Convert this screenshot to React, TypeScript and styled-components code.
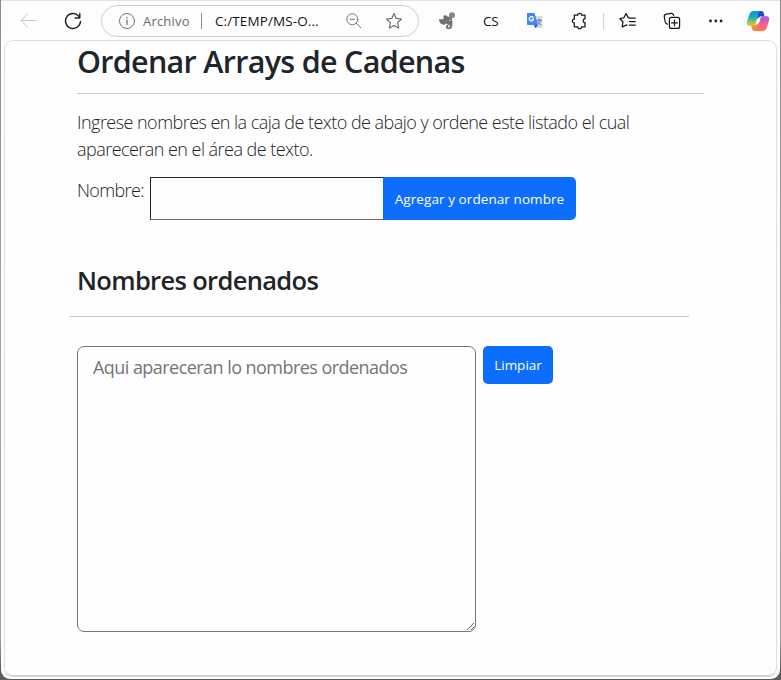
import React from "react";
import styled, { createGlobalStyle } from "styled-components";

const GlobalStyle = createGlobalStyle`
  * { box-sizing: border-box; }
  body {
    margin: 0;
    overflow: hidden;
    background: #626262;
    color: #212529;
    font-family: "Open Sans", "Noto Sans", sans-serif;
  }
`;

const Desktop = styled.div`
  height: 680px;
  padding: 0 1px 1px;
  background: linear-gradient(#8b8b8b 0, #a6a6a6 380px, #9e9e9e 640px, #5c5c5c 670px);
`;

const Window = styled.div`
  height: 679px;
  padding: 0 3px 2px;
  display: flex;
  flex-direction: column;
  background: #fdfdfd;
  border-top: 1px solid #e3e3e3;
  border-radius: 0 0 9px 9px;
`;

const Toolbar = styled.header`
  height: 39px;
  flex: none;
  display: flex;
  align-items: center;
  padding-left: 14px;
`;

const Glyph = styled.svg<{ $gap?: number }>`
  display: block;
  flex: none;
  margin-left: ${(p) => p.$gap ?? 0}px;
  fill: none;
  stroke-linecap: round;
  stroke-linejoin: round;
`;

const AddressBar = styled.div`
  width: 318px;
  height: 32px;
  margin-left: 18px;
  display: flex;
  align-items: center;
  border: 1px solid #cfcfcf;
  border-radius: 16px;
  font-size: 13px;
  white-space: nowrap;
`;

const Scheme = styled.span`
  width: 58px;
  margin-left: 7px;
  color: #6c6c6c;
  letter-spacing: 0.2px;
`;

const Address = styled.span`
  width: 104px;
  margin-left: 13px;
  color: #151515;
  font-size: 13.5px;
  letter-spacing: 0.1px;
`;

const Divider = styled.i<{ $gap?: number }>`
  width: 1px;
  height: 16px;
  margin-left: ${(p) => p.$gap ?? 0}px;
  background: #8f8f8f;
`;

const FaintDivider = styled(Divider)`
  background: #d2d2d2;
`;

const ExtensionLabel = styled.span`
  width: 18px;
  margin-left: 27px;
  font-size: 13.5px;
  font-weight: 500;
  color: #111;
  letter-spacing: -0.3px;
`;

const Page = styled.main`
  flex: 1;
  padding: 0 72px;
  border: 1px solid #dedede;
  border-bottom: 2px solid #d4d4d4;
  border-radius: 9px;
  background: #fefefe;
`;

const Title = styled.h1`
  height: 53px;
  width: 627px;
  margin: 0;
  line-height: 40px;
  font-size: 30.5px;
  font-weight: 600;
  letter-spacing: -0.7px;
  white-space: nowrap;
  border-bottom: 1px solid #c5c7c8;
`;

const Lead = styled.p`
  margin: 15px 0 0;
  font-size: 18px;
  font-weight: 300;
  line-height: 27px;
  letter-spacing: -0.54px;
  white-space: nowrap;
`;

const EntryRow = styled.form`
  display: flex;
  margin-top: 14px;
`;

const Label = styled.label`
  width: 73px;
  font-size: 18px;
  font-weight: 300;
  line-height: 27px;
  letter-spacing: -0.65px;
`;

const NameInput = styled.input`
  width: 233px;
  height: 43px;
  padding: 0 12px;
  border: 1px solid #212529;
  border-bottom-color: #6c6c6c;
  border-right: 0;
  border-radius: 0;
  background: #fefefe;
  font: 18px "Open Sans", sans-serif;
  outline: none;
`;

const Button = styled.button`
  width: 70px;
  height: 38px;
  padding: 0;
  border: 0;
  border-radius: 5px;
  background: #0d6efd;
  color: #fff;
  font: 500 13.5px "Open Sans", sans-serif;
  white-space: nowrap;
`;

const AddButton = styled(Button)`
  width: 193px;
  height: 43px;
  border-radius: 0 5px 5px 0;
  letter-spacing: 0.08px;
`;

const Subtitle = styled.h2`
  height: 57px;
  width: 619px;
  margin: 40px 0 0 -7px;
  padding-left: 7px;
  line-height: 40px;
  font-size: 25.5px;
  font-weight: 600;
  letter-spacing: -0.66px;
  white-space: nowrap;
  border-bottom: 1px solid #c5c7c8;
`;

const ResultRow = styled.section`
  display: flex;
  gap: 7px;
  align-items: flex-start;
  margin-top: 29px;
`;

const ResultArea = styled.textarea`
  display: block;
  width: 399px;
  height: 286px;
  padding: 7px 15px;
  border: 1px solid #767676;
  border-radius: 7px;
  background: #fefefe;
  font: 18px/27px "Open Sans", sans-serif;
  letter-spacing: -0.55px;
  outline: none;
  &::placeholder { color: #757575; opacity: 1; }
`;

const BackIcon = () => (
  <Glyph width="20" height="20" stroke="#c6c6c6">
    <path d="M18 9.5H3M9.5 3 3 9.5 9.5 16" />
  </Glyph>
);

const ReloadIcon = () => (
  <Glyph width="20" height="20" $gap={25} stroke="#202020" strokeWidth="1.4">
    <path d="M17.5 10.5A7.5 7.5 0 1 1 15.8 5.2M16.8 2.5V7H12.2" />
  </Glyph>
);

const InfoIcon = () => (
  <Glyph width="18" height="18" $gap={16} stroke="#747474">
    <circle cx="9" cy="9" r="7.5" />
    <path d="M9 8v4.5M9 5.4v.4" strokeWidth="1.3" />
  </Glyph>
);

const ZoomOutIcon = () => (
  <Glyph width="18" height="18" $gap={26} stroke="#747474">
    <circle cx="7.3" cy="7.3" r="5.5" />
    <path d="M5 7.3h4.6M11.3 11.3l4.5 4.5" />
  </Glyph>
);

const StarIcon = () => (
  <Glyph width="18" height="18" $gap={22} stroke="#686868" strokeWidth="1.1">
    <path d="m9 1.5 2.2 4.9 5.3.6-3.9 3.7 1 5.3L9 13.4 4.4 16l1-5.3L1.5 7l5.3-.6Z" />
  </Glyph>
);

const ElephantIcon = () => (
  <Glyph width="18" height="18" $gap={19}>
    <circle cx="14" cy="3.3" r="3" fill="#858585" />
    <path
      fill="#707070"
      d="M5.5 3.7C7 2.7 9.2 3.2 9.5 4.6c2 .3 3.3.7 4 1.7 1.4 2.6.9 6.4.5 8.5-.3 1.8-1.6 2.5-3.3 2.5-2.1 0-3-1.2-2.8-2.8.2-1.2 1.4-1.6 2.6-1.3v1.5h-1c0 1 2.5 1.2 2.5-.4 0-1.3-1.3-1.8-2.5-1.9-.6-.1-1-.8-1.2-1.3-.4 1.5-1.4 1.8-2.8 1.6C2.6 12.3 1 10 1 7.2h3.5c.8 0 1-.3 1-1Z"
    />
    <path fill="#fdfdfd" d="M11.3 8.1c1-.5 1.5.1 1.5 1-.6-.2-1-.3-1.6-.2Z" />
  </Glyph>
);

const TranslateIcon = () => (
  <Glyph width="18" height="18" $gap={25}>
    <path fill="#d9d9d9" d="M6 4h10.5v12H10Z" />
    <path stroke="#657f94" d="M11 8.3h4.6M13 7.2v1.1m1.6 0c-.4 2-1.4 3.2-2.8 4.2M12 9.6c.6 1.4 1.6 2.4 2.8 3.2" />
    <path fill="#4285f4" d="M1 1h7.5L12 13H2a1 1 0 0 1-1-1Z" />
    <path fill="#2559b5" d="m8 13 4 0-2.8 3.3Z" />
    <path stroke="#fff" strokeWidth="1.2" d="M7.3 5.6A2.2 2.2 0 1 0 7.6 7.4H5.9" />
  </Glyph>
);

const PuzzleIcon = () => (
  <Glyph width="18" height="18" $gap={27} stroke="#171717" strokeWidth="1.25">
    <path d="M3.3 3.2h3.4C6.4.7 10.8.7 10.5 3.2H14v3.5c-2.3-.1-2.5 4.1 0 4v4.1h-3.5c.4 2.4-4.1 2.4-3.8 0H3.3v-3.9C.7 11.2.7 6.8 3.3 7.1Z" />
  </Glyph>
);

const FavoritesIcon = () => (
  <Glyph width="18" height="18" $gap={15} stroke="#171717" strokeWidth="1.25">
    <path d="M10.4 5.8 9.2 5.6 7 1.5 4.9 5.8.8 6.5l3.1 3.3-.7 5L8 12.9M10.3 6h6M10.3 9.5h6M10.3 13h6" />
  </Glyph>
);

const CollectionsIcon = () => (
  <Glyph width="18" height="18" $gap={26} stroke="#171717" strokeWidth="1.2">
    <rect x="6.4" y="5.4" width="10.2" height="11" rx="2" />
    <path d="M4.4 12.2C3 12 2.4 11 2.1 9.7L1.3 4.8C1 3.2 2 2.5 3.3 2.2l5-.8c1.5-.2 2.2.8 2.4 2M8.6 10.9h5.8M11.5 8v5.8" />
  </Glyph>
);

const MoreIcon = () => (
  <Glyph width="18" height="18" $gap={26}>
    <g fill="#222">
      <circle cx="3.5" cy="9" r="1.4" />
      <circle cx="8.8" cy="9" r="1.4" />
      <circle cx="14.1" cy="9" r="1.4" />
    </g>
  </Glyph>
);

const CopilotIcon = () => (
  <Glyph width="24" height="22" $gap={21}>
    <defs>
      <linearGradient id="coolRibbon" x1="0" y1="0" x2="0" y2="1">
        <stop stopColor="#168ce0" />
        <stop offset=".45" stopColor="#21aeb5" />
        <stop offset=".75" stopColor="#9bc35a" />
        <stop offset="1" stopColor="#f4ba2e" />
      </linearGradient>
      <linearGradient id="warmRibbon" x1="0" y1="0" x2="0" y2="1">
        <stop stopColor="#a958ee" />
        <stop offset=".5" stopColor="#ed5d98" />
        <stop offset="1" stopColor="#fa7850" />
      </linearGradient>
    </defs>
    <path fill="#174fc0" d="M12 1h3.2c1.7 0 2.2 1.2 2.8 3.4l.6 2h-4.5L11 9Z" />
    <path fill="#f48a3c" d="M12 21H8.5c-1.7 0-2.4-1.3-2.8-3.4L5 15h4.5l3.5-2Z" />
    <path fill="url(#coolRibbon)" d="M7.8 1h6.6c-1.4.5-1.8 2.1-2.3 3.9L9.8 13c-.4 1.7-1.3 2.8-3.1 2.8H3.2C.7 15.8.6 13.3 1.2 11L3.5 4C4.3 2 5.6 1 7.8 1Z" />
    <path fill="url(#warmRibbon)" d="M16.4 21H9.7c1.4-.5 1.8-2.1 2.3-3.9L14.2 9c.4-1.7 1.3-2.8 3.1-2.8h3.6c2.5 0 2.6 2.4 2 4.7L20.7 18c-.8 2-2.1 3-4.3 3Z" />
  </Glyph>
);

export default function App() {
  return (
    <>
      <GlobalStyle />
      <Desktop>
        <Window>
          <Toolbar>
            <BackIcon />
            <ReloadIcon />
            <AddressBar>
              <InfoIcon />
              <Scheme>Archivo</Scheme>
              <Divider />
              <Address>C:/TEMP/MS-O...</Address>
              <ZoomOutIcon />
              <StarIcon />
            </AddressBar>
            <ElephantIcon />
            <ExtensionLabel>CS</ExtensionLabel>
            <TranslateIcon />
            <PuzzleIcon />
            <FaintDivider $gap={14} />
            <FavoritesIcon />
            <CollectionsIcon />
            <MoreIcon />
            <CopilotIcon />
          </Toolbar>
          <Page>
            <Title>Ordenar Arrays de Cadenas</Title>
            <Lead>
              Ingrese nombres en la caja de texto de abajo y ordene este listado el cual
              <br />
              apareceran en el área de texto.
            </Lead>
            <EntryRow>
              <Label htmlFor="nombre">Nombre:</Label>
              <NameInput id="nombre" />
              <AddButton type="button">Agregar y ordenar nombre</AddButton>
            </EntryRow>
            <Subtitle>Nombres ordenados</Subtitle>
            <ResultRow>
              <ResultArea placeholder="Aqui apareceran lo nombres ordenados" />
              <Button type="button">Limpiar</Button>
            </ResultRow>
          </Page>
        </Window>
      </Desktop>
    </>
  );
}
